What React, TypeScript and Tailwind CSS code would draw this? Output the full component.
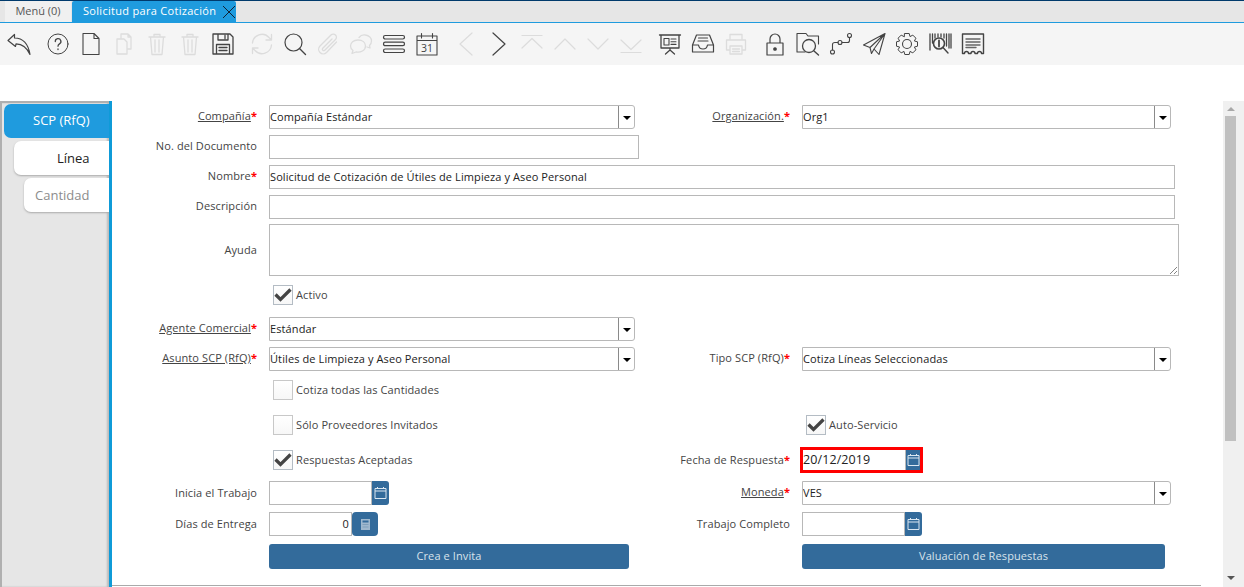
// Ventana "Solicitud para Cotización"
import type { ReactNode } from 'react';

const ON = '#444444';
const OFF = '#dcdcdc';

function Ico({ children, off, gap }: { children: ReactNode; off?: boolean; gap?: boolean }) {
  return (
    <div className={`flex w-[33px] shrink-0 items-center justify-center ${gap ? 'ml-[6px]' : ''}`}>
      <svg
        width="24"
        height="24"
        viewBox="0 0 24 24"
        fill="none"
        stroke={off ? OFF : ON}
        strokeWidth="1.1"
        strokeLinejoin="round"
        strokeLinecap="round"
      >
        {children}
      </svg>
    </div>
  );
}

function Toolbar() {
  return (
    <div className="flex h-[42px] items-center bg-[#f5f5f5] pl-[2.5px]">
      {/* deshacer */}
      <Ico>
        <path d="M1 8.5 7.5 2.5 7.5 6C15 6 21 10.5 23 22.5 20 15.5 15 12 9 11.8L8.5 14.5Z" strokeWidth="1.2" />
      </Ico>
      <Ico gap>
        <circle cx="12" cy="12" r="10" strokeWidth="1" />
        <path d="M9.300 9.500a2.800 2.800 0 1 1 4.200 2.400c-1 .6-1.500 1.100-1.500 2.300M12 17v.6" strokeWidth="1.300" />
      </Ico>
      <Ico>
        <path d="M4 1.500H15L20 6.500V22.500H4ZM15 1.500V6.500H20" strokeWidth="1.100" />
      </Ico>
      <Ico off>
        <path d="M5 7H12L15 10V22H5ZM9 7V2H16L19 5V17H15M16 2V5H19" strokeWidth="1.3" />
      </Ico>
      <Ico off>
        <path d="M4 5H20M9 5V2.500H15V5M5.500 5 7 22.500H17L18.500 5M10 8V20M14 8V20" strokeWidth="1.3" />
      </Ico>
      <Ico off>
        <path d="M4 5H20M9 5V2.500H15V5M5.500 5 7 22.500H17L18.500 5M10 8V20M14 8V20" strokeWidth="1.3" />
      </Ico>
      <Ico>
        <path d="M2 2H19L22 5V22H2ZM7 2V8H17V2M14 3.500V6.500M5.500 22V12.500H18.500V22" strokeWidth="1.300" />
        <path d="M8 15.500H16M8 18.500H16" strokeWidth="1.300" />
      </Ico>
      <Ico off gap>
        <path d="M2.500 11A9.500 9.500 0 0 1 19 5.500L21.500 8M21.500 2.500V8H16M21.500 13A9.500 9.500 0 0 1 5 18.500L2.500 16M2.500 21.500V16H8" strokeWidth="1.3" />
      </Ico>
      <Ico>
        <circle cx="10.500" cy="10.500" r="8.500" strokeWidth="1.200" />
        <path d="M16.500 16.500 22.500 22.500" strokeWidth="1.400" />
      </Ico>
      <Ico off>
        <path d="M20.500 10 10.500 20.500A4.500 4.500 0 0 1 4 14L15 3A3 3 0 0 1 19.500 7.500L8.500 18.500A1.500 1.500 0 0 1 6.500 16.500L16 7" strokeWidth="1.3" />
      </Ico>
      <Ico off>
        <path d="M9 8C4.500 8 1.500 10.500 1.500 14C1.500 16 2.500 17.500 4 18.500L3 21.500 7 20C11.500 20.800 16.500 18.500 16.500 14C16.500 10.500 13.500 8 9 8Z" strokeWidth="1.3" />
        <path d="M10 5.500C11.500 3.500 14 2.500 16.500 3C20 3.500 22.500 6 22.500 9C22.500 11 21.500 12.500 20.500 13.500L21 16 18 15" strokeWidth="1.3" />
      </Ico>
      <Ico>
        <rect x="1.500" y="3.500" width="21" height="3.500" rx="1.700" strokeWidth="1.200" />
        <rect x="1.500" y="10.200" width="21" height="3.500" rx="1.700" strokeWidth="1.200" />
        <rect x="1.500" y="17" width="21" height="3.500" rx="1.700" strokeWidth="1.200" />
      </Ico>
      <Ico>
        <path d="M2 4H22V23H2ZM2 8.500H22M6.500 1.500V6M17.500 1.500V6" strokeWidth="1.100" />
        <text x="12" y="20" textAnchor="middle" fontSize="10.500" fill={ON} stroke="none" fontFamily="'Open Sans', sans-serif">31</text>
      </Ico>
      <Ico off gap>
        <path d="M18 1 6 12 18 23" strokeWidth="1.200" />
      </Ico>
      <Ico>
        <path d="M6 1 18 12 6 23" strokeWidth="1.200" />
      </Ico>
      <Ico off>
        <path d="M2 3.500H22M2 16 12 6.500 22 16" strokeWidth="1.200" />
      </Ico>
      <Ico off>
        <path d="M2 17 12 7 22 17" strokeWidth="1.200" />
      </Ico>
      <Ico off>
        <path d="M2 7 12 17 22 7" strokeWidth="1.200" />
      </Ico>
      <Ico off>
        <path d="M2 20.500H22M2 8 12 17.500 22 8" strokeWidth="1.200" />
      </Ico>
      <Ico gap>
        <path d="M1.500 3H22.500M3 3V16H21V3M12 16V18M7.500 22 12 18 16.500 22" strokeWidth="1.300" />
        <path d="M6 6.500H11V13H6ZM13 7H18M13 9.700H18M13 12.400H18" strokeWidth="1.100" />
      </Ico>
      <Ico>
        <path d="M5.500 3H18.500L22.500 13V20H1.500V13ZM1.500 13H7.500C8 16 10 17 12 17S16 16 16.500 13H22.500" strokeWidth="1.200" />
        <path d="M7.500 6H16.500M7 9H17" strokeWidth="1.100" />
      </Ico>
      <Ico off>
        <path d="M6 8V2.500H18V8M6 18H2.500V8H21.500V18H18M6 14H18V22H6ZM8.500 17H15.500M8.500 19.500H15.500" strokeWidth="1.3" />
      </Ico>
      <Ico gap>
        <path d="M4 11H20V23H4ZM7 11V7A5 5 0 0 1 17 7V11" strokeWidth="1.200" />
        <circle cx="12" cy="17" r="1.300" fill={ON} />
      </Ico>
      <Ico>
        <path d="M1 20V1.500H10L12 4H22.500V12M1 20H9" strokeWidth="1.100" />
        <circle cx="13" cy="14" r="6.500" strokeWidth="1.300" />
        <path d="M18 19 22.500 23" strokeWidth="1.400" />
      </Ico>
      <Ico>
        <circle cx="3.500" cy="20" r="2" />
        <circle cx="11" cy="10.500" r="2" />
        <circle cx="20.500" cy="3.500" r="2" />
        <path d="M3.500 18V12.500C3.500 11 4.500 10.500 6 10.500H9M13 10.500H18.500C20 10.500 20.500 10 20.500 8.500V5.500" strokeWidth="1.100" />
      </Ico>
      <Ico>
        <path d="M23 1.500 1.500 13 8 15.500ZM23 1.500 8 15.500 9.500 21.500 12 17ZM23 1.500 17 22.500 12 17" strokeWidth="1.100" />
      </Ico>
      <Ico>
        <path d="M9.800 1.500H14.200L15 4.600 17.800 3.100 20.900 6.200 19.400 9 22.500 9.800V14.200L19.400 15 20.900 17.800 17.800 20.900 15 19.400 14.200 22.500H9.800L9 19.400 6.200 20.900 3.100 17.800 4.600 15 1.500 14.200V9.800L4.600 9 3.100 6.200 6.200 3.100 9 4.600Z" strokeWidth="1" />
        <circle cx="12" cy="12" r="4.500" strokeWidth="1.100" />
      </Ico>
      <Ico>
        <path d="M2 2V18M4.500 2V11M7 2V6M10 2V5M13 2V5M16 2V6M18.500 2V14M21 2V16M23 2V16" strokeWidth="1.300" />
        <circle cx="11" cy="11.500" r="5.500" strokeWidth="1.600" />
        <path d="M11 8.500V14.500" strokeWidth="1.800" />
        <path d="M15 15.500 20 21" strokeWidth="1.400" />
      </Ico>
      <Ico>
        <path d="M1.500 2H22.500V21.500H20.500A2 2 0 0 0 16.500 21.500H14A2 2 0 0 0 10 21.500H7.500A2 2 0 0 0 3.500 21.500H1.500Z" strokeWidth="1.400" />
        <path d="M5 7H19M5 10H19M5 13H19M5 15.500H15" strokeWidth="1.400" stroke="#666666" />
      </Ico>
    </div>
  );
}

function Label({ text, req, link, w, low }: { text: string; req?: boolean; link?: boolean; w: string; low?: boolean }) {
  return (
    <div className={`${w} shrink-0 text-right text-[#444] ${low ? '' : 'pb-[2px]'}`}>
      <span className={link ? 'underline' : ''}>{text}</span>
      {req && <span className="font-bold text-[#f00]">*</span>}
    </div>
  );
}

function Text({ w, h, value }: { w: string; h?: string; value?: string }) {
  return (
    <div className={`${w} ${h ?? 'h-[24px]'} flex items-center border border-[#b8b8b8] bg-white text-[#222]`}>
      {value}
    </div>
  );
}

function Combo({ w, value }: { w: string; value: string }) {
  return (
    <div className={`${w} flex h-[24px] rounded-r-[3px] border border-[#b8b8b8] bg-white text-[#222]`}>
      <div className="flex flex-1 items-center truncate">{value}</div>
      <div className="flex w-[16px] items-center justify-center border-l border-[#8a8a8a]">
        <div className="mt-[1px] h-0 w-0 border-x-[4px] border-t-[4px] border-x-transparent border-t-black" />
      </div>
    </div>
  );
}

function Check({ text, on }: { text: string; on?: boolean }) {
  return (
    <div className="flex items-center gap-[3px] text-[#444]">
      <div className={`relative size-[20px] border bg-gradient-to-b from-white to-[#f7f7f7] ${on ? 'border-[#b4bcc4]' : 'border-[#c8c8c8]'}`}>
        {on && (
          <svg className="absolute left-0 top-0" width="18" height="18" viewBox="0 0 18 18" fill="none">
            <path d="M1.500 8.500 6.500 13.500 16.500 3.500" stroke="#444" strokeWidth="3.200" />
          </svg>
        )}
      </div>
      <span>{text}</span>
    </div>
  );
}

function CalBtn() {
  return (
    <div className="flex h-[24px] w-[17px] items-center justify-center rounded-r-[3px] bg-[#336b9b]">
      <svg width="13" height="14" viewBox="0 0 13 14" fill="none" stroke="#dbe7f1" strokeWidth="1">
        <path d="M1 2.500H12V12.500H1ZM1 5H12M3.500 1V3M9.500 1V3" />
      </svg>
    </div>
  );
}

function Row({ h, mt, children }: { h: string; mt: string; children: ReactNode }) {
  return <div className={`flex ${h} ${mt} items-center`}>{children}</div>;
}

// etiqueta + separación de la columna izquierda
const LW = 'w-[145px]';
const RW = 'w-[150px]';

function Form() {
  return (
    <div className="relative h-full flex-1 pt-[4px] text-[11px] tracking-[0.1px]">
      <Row h="h-[24px]" mt="mt-0">
        <Label w={LW} text="Compañía" req link />
        <div className="ml-[12px] w-[371px]"><Combo w="w-[366px]" value="Compañía Estándar" /></div>
        <Label w={RW} text="Organización." req link />
        <div className="ml-[12px]"><Combo w="w-[369px]" value="Org1" /></div>
      </Row>
      <Row h="h-[24px]" mt="mt-[6px]">
        <Label w={LW} text="No. del Documento" />
        <div className="ml-[12px]"><Text w="w-[370px]" /></div>
      </Row>
      <Row h="h-[24px]" mt="mt-[6px]">
        <Label w={LW} text="Nombre" req />
        <div className="ml-[12px]"><Text w="w-[906px]" value="Solicitud de Cotización de Útiles de Limpieza y Aseo Personal" /></div>
      </Row>
      <Row h="h-[24px]" mt="mt-[6px]">
        <Label w={LW} text="Descripción" />
        <div className="ml-[12px]"><Text w="w-[906px]" /></div>
      </Row>
      <Row h="h-[52px]" mt="mt-[5px]">
        <Label w={LW} text="Ayuda" low />
        <div className="relative ml-[12px]">
          <Text w="w-[910px]" h="h-[52px]" />
          <svg className="absolute bottom-[1px] right-[1px]" width="9" height="9" viewBox="0 0 9 9" stroke="#666" strokeWidth="0.800">
            <path d="M1 8 8 1M5 8 8 5" />
          </svg>
        </div>
      </Row>
      <Row h="h-[20px]" mt="mt-[9px]">
        <div className="ml-[161px]"><Check text="Activo" on /></div>
      </Row>
      <Row h="h-[24px]" mt="mt-[12px]">
        <Label w={LW} text="Agente Comercial" req link />
        <div className="ml-[12px]"><Combo w="w-[366px]" value="Estándar" /></div>
      </Row>
      <Row h="h-[24px]" mt="mt-[6px]">
        <Label w={LW} text="Asunto SCP (RfQ)" req link />
        <div className="ml-[12px] w-[371px]"><Combo w="w-[366px]" value="Útiles de Limpieza y Aseo Personal" /></div>
        <Label w={RW} text="Tipo SCP (RfQ)" req />
        <div className="ml-[12px]"><Combo w="w-[369px]" value="Cotiza Líneas Seleccionadas" /></div>
      </Row>
      <Row h="h-[20px]" mt="mt-[9px]">
        <div className="ml-[161px]"><Check text="Cotiza todas las Cantidades" /></div>
      </Row>
      <Row h="h-[20px]" mt="mt-[15px]">
        <div className="ml-[161px] w-[533px]"><Check text="Sólo Proveedores Invitados" /></div>
        <Check text="Auto-Servicio" on />
      </Row>
      <Row h="h-[26px]" mt="mt-[12px]">
        <div className="ml-[161px] w-[367px]"><Check text="Respuestas Aceptadas" on /></div>
        <Label w={RW} text="Fecha de Respuesta" req low />
        <div className="ml-[10px] flex h-[26px] w-[123px] border-[3px] border-[#f00]">
          <div className="flex flex-1 items-center border-r border-[#b8b8b8] text-[12.5px] text-[#222]">20/12/2019</div>
          <div className="flex w-[14px] items-center justify-center bg-[#336b9b]">
            <svg width="13" height="14" viewBox="0 0 13 14" fill="none" stroke="#dbe7f1" strokeWidth="1">
              <path d="M1 2.500H12V12.500H1ZM1 5H12M3.500 1V3M9.500 1V3" />
            </svg>
          </div>
        </div>
      </Row>
      <Row h="h-[24px]" mt="mt-[8px]">
        <Label w={LW} text="Inicia el Trabajo" low />
        <div className="ml-[12px] flex w-[371px]">
          <Text w="w-[103px]" />
          <CalBtn />
        </div>
        <Label w={RW} text="Moneda" req link />
        <div className="ml-[12px]"><Combo w="w-[369px]" value="VES" /></div>
      </Row>
      <Row h="h-[24px]" mt="mt-[7px]">
        <Label w={LW} text="Días de Entrega" low />
        <div className="ml-[12px] flex w-[371px]">
          <div className="flex h-[24px] w-[83px] items-center justify-end border border-[#b8b8b8] pr-[2px] text-[#222]">0</div>
          <div className="flex h-[24px] w-[26px] items-center justify-center rounded-[4px] bg-[#336b9b]">
            <svg width="9" height="11" viewBox="0 0 9 11">
              <rect width="9" height="11" fill="#9fb8ce" />
              <rect x="1.500" y="1.500" width="6" height="2" fill="#336b9b" />
              <rect x="1.500" y="5" width="6" height="1" fill="#7f9fbb" />
              <rect x="1.500" y="7.500" width="6" height="1" fill="#7f9fbb" />
            </svg>
          </div>
        </div>
        <Label w={RW} text="Trabajo Completo" low />
        <div className="ml-[12px] flex">
          <Text w="w-[103px]" />
          <CalBtn />
        </div>
      </Row>
      <Row h="h-[25px]" mt="mt-[8px]">
        <div className="ml-[157px] flex h-[25px] w-[360px] items-center justify-center rounded-[3px] bg-[#336b9b] text-[#d8e3ec]">Crea e Invita</div>
        <div className="ml-[173px] flex h-[25px] w-[363px] items-center justify-center rounded-[3px] bg-[#336b9b] text-[#d8e3ec]">Valuación de Respuestas</div>
      </Row>
      <div className="mt-[16px] h-[1px] w-[1089px] bg-[#aaaaaa]" />
    </div>
  );
}

function SideTabs() {
  return (
    <div className="flex h-full w-[109px] shrink-0 flex-col border-l-[2px] border-t-[2px] border-[#b0b0b0] bg-[#e6e6e6] pt-[1px] text-[13px] shadow-[inset_-2px_0_2px_#bbbbbb]">
      <div className="ml-[2px] flex h-[34px] items-center rounded-l-[7px] bg-[#1f9bde] pl-[29px] font-medium text-white">SCP (RfQ)</div>
      <div className="ml-[12px] mt-[3px] flex h-[34px] items-center rounded-l-[7px] bg-white pl-[43px] pt-[2px] text-[#222] shadow-[0_1px_2px_#aaaaaa]">Línea</div>
      <div className="ml-[22px] mt-[3px] flex h-[34px] items-center rounded-l-[7px] bg-white pl-[11px] pt-[2px] text-[#8c8c8c] shadow-[0_1px_2px_#aaaaaa]">Cantidad</div>
    </div>
  );
}

function Scrollbar() {
  return (
    <div className="flex h-full w-[21px] shrink-0 flex-col items-start bg-[#f0f0f0] pl-[2px]">
      <div className="flex h-[15px] w-[11px] items-center justify-center">
        <div className="h-0 w-0 border-x-[4px] border-b-[4px] border-x-transparent border-b-[#a8a8a8]" />
      </div>
      <div className="h-[325px] w-[11px] bg-[#c0c0c0]" />
      <div className="flex-1" />
      <div className="mb-[7px] flex h-[4px] w-[11px] items-center justify-center">
        <div className="h-0 w-0 border-x-[4px] border-t-[4px] border-x-transparent border-t-[#555]" />
      </div>
    </div>
  );
}

export default function App() {
  return (
    <div className="flex h-[587px] w-[1244px] flex-col overflow-hidden bg-white font-['Open_Sans','Noto_Sans',sans-serif]">
      <div className="flex h-[23px] shrink-0 items-end border-y border-b-[#1f9bde] border-t-[#003a6c] bg-[#e6e6e6] pl-[5px] text-[11px]">
        <div className="flex h-[21px] w-[66px] items-center justify-center bg-[#f0f0f0] text-[#555]">Menú (0)</div>
        <div className="ml-[1px] flex h-[21px] w-[164px] items-center rounded-t-[2px] bg-[#1f9bde] pl-[11px] font-medium text-white">
          <span className="whitespace-nowrap tracking-[0.3px]">Solicitud para Cotización</span>
          <svg className="ml-[6px] shrink-0" width="14" height="14" viewBox="0 0 14 14" stroke="#123" strokeWidth="1">
            <path d="M1 1 13 13M13 1 1 13" />
          </svg>
        </div>
      </div>
      <Toolbar />
      <div className="h-[36px] shrink-0" />
      <div className="flex min-h-0 flex-1">
        <SideTabs />
        <div className="h-full w-[3px] shrink-0 bg-[#0f9bd8]" />
        <Form />
        <Scrollbar />
      </div>
    </div>
  );
}
